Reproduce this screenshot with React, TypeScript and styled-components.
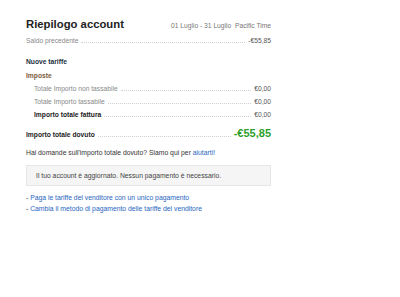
import React from 'react';
import styled, { createGlobalStyle } from 'styled-components';

const GlobalStyle = createGlobalStyle`
  body {
    margin: 0;
    background: #fff;
    font-family: 'Liberation Sans', Arial, sans-serif;
    color: #333;
  }
`;

const Page = styled.div`
  width: 245px;
  padding: 16px 0 0 26px;
`;

const Header = styled.div`
  display: flex;
  align-items: baseline;
  justify-content: space-between;
  height: 16px;
`;

const Title = styled.h1`
  margin: 0;
  font-size: 11.3px;
  line-height: 16px;
  font-weight: bold;
  color: #222;
`;

const DateRange = styled.span`
  font-size: 6.7px;
  color: #777;
  white-space: pre;
`;

const Row = styled.div<{ $indent?: boolean; $height?: number; $top?: number }>`
  display: flex;
  align-items: baseline;
  height: ${(p) => p.$height ?? 13}px;
  line-height: ${(p) => p.$height ?? 13}px;
  margin-top: ${(p) => p.$top ?? 0}px;
  padding-left: ${(p) => (p.$indent ? 8 : 0)}px;
  font-size: 6.7px;
`;

const Label = styled.span<{ $tone?: 'muted' | 'strong' }>`
  color: ${(p) => (p.$tone === 'strong' ? '#222' : '#888')};
  font-weight: ${(p) => (p.$tone === 'strong' ? 'bold' : 'normal')};
  white-space: nowrap;
`;

const Leader = styled.span`
  flex: 1;
  margin: 0 3px;
  border-bottom: 1px dotted #d0d0d0;
`;

const Amount = styled.span`
  color: #555;
  white-space: nowrap;
`;

const Total = styled.span`
  color: #2c9f2c;
  font-weight: bold;
  font-size: 11px;
`;

const Section = styled.div<{ $top: number; $color?: string }>`
  margin-top: ${(p) => p.$top}px;
  height: 12px;
  line-height: 12px;
  font-size: 6.7px;
  font-weight: bold;
  color: ${(p) => p.$color ?? '#232f3e'};
`;

const Question = styled.p`
  margin: 6px 0 0;
  height: 12px;
  line-height: 12px;
  font-size: 6.8px;
  color: #333;
`;

const Link = styled.a`
  color: #1f65c0;
  text-decoration: none;
`;

const Notice = styled.div`
  box-sizing: border-box;
  margin-top: 6px;
  height: 21px;
  padding-left: 9px;
  display: flex;
  align-items: center;
  background: #f5f5f5;
  border: 1px solid #e6e6e6;
  font-size: 6.8px;
  color: #444;
`;

const Links = styled.ul`
  list-style: none;
  margin: 6px 0 0;
  padding: 0;
`;

const LinkItem = styled.li`
  height: 11px;
  line-height: 11px;
  font-size: 6.8px;
  color: #333;
`;

export default function App() {
  return (
    <>
      <GlobalStyle />
      <Page>
        <Header>
          <Title>Riepilogo account</Title>
          <DateRange>01 Luglio - 31 Luglio  Pacific Time</DateRange>
        </Header>
        <Row $height={12} $top={3}>
          <Label>Saldo precedente</Label>
          <Leader />
          <Amount>-€55,85</Amount>
        </Row>
        <Section $top={9}>Nuove tariffe</Section>
        <Section $top={2} $color="#7d5a3a">Imposte</Section>
        <Row $indent>
          <Label>Totale Importo non tassabile</Label>
          <Leader />
          <Amount>€0,00</Amount>
        </Row>
        <Row $indent>
          <Label>Totale Importo tassabile</Label>
          <Leader />
          <Amount>€0,00</Amount>
        </Row>
        <Row $indent>
          <Label $tone="strong">Importo totale fattura</Label>
          <Leader />
          <Amount>€0,00</Amount>
        </Row>
        <Row $height={16} $top={4}>
          <Label $tone="strong">Importo totale dovuto</Label>
          <Leader />
          <Total>-€55,85</Total>
        </Row>
        <Question>
          Hai domande sull'importo totale dovuto? Siamo qui per <Link href="#">aiutarti!</Link>
        </Question>
        <Notice>Il tuo account è aggiornato. Nessun pagamento è necessario.</Notice>
        <Links>
          <LinkItem>
            - <Link href="#">Paga le tariffe del venditore con un unico pagamento</Link>
          </LinkItem>
          <LinkItem>
            - <Link href="#">Cambia il metodo di pagamento delle tariffe del venditore</Link>
          </LinkItem>
        </Links>
      </Page>
    </>
  );
}
